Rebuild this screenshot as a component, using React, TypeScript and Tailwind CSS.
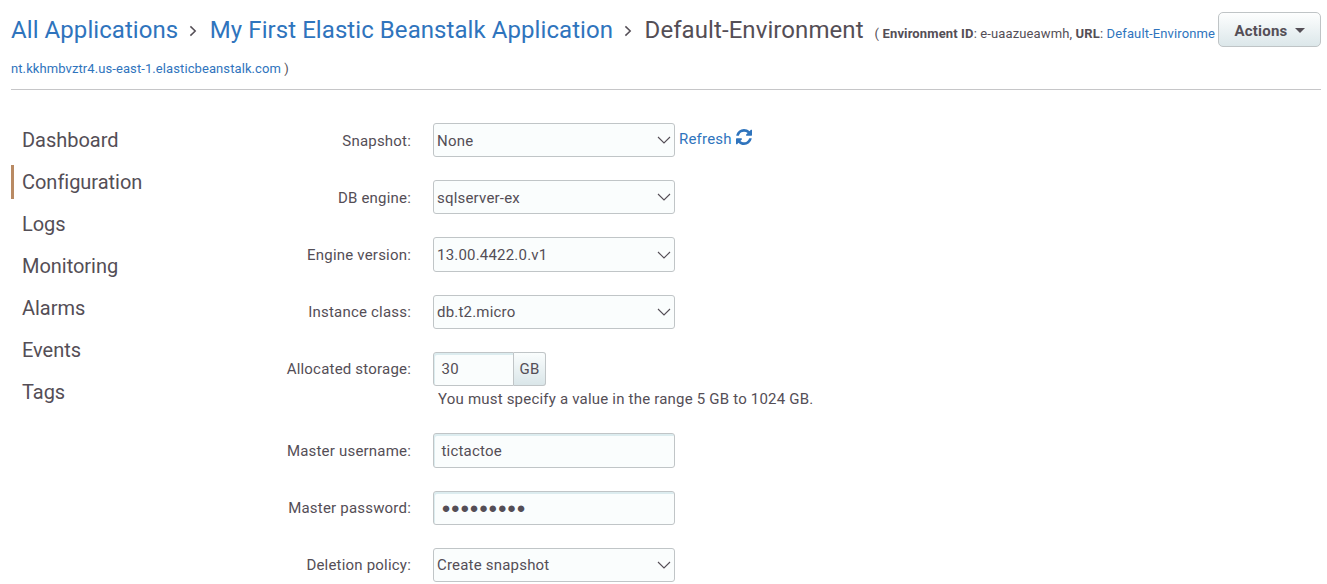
import type { ReactNode } from 'react';

const navItems = ['Dashboard', 'Configuration', 'Logs', 'Monitoring', 'Alarms', 'Events', 'Tags'];

function RefreshIcon() {
  return (
    <svg viewBox="0 0 1536 1536" className="mb-[4px] h-[16px] w-[16px]" fill="currentColor" aria-hidden="true">
      <path d="M1511 928q0 5-1 7-64 268-268 434.5t-478 166.5q-146 0-282.5-55t-243.5-157l-129 129q-19 19-45 19t-45-19-19-45v-448q0-26 19-45t45-19h448q26 0 45 19t19 45-19 45l-137 137q71 66 161 102t187 36q134 0 250-65t186-179q11-17 53-117 8-23 30-23h192q13 0 22.5 9.5t9.5 22.5zm25-800v448q0 26-19 45t-45 19h-448q-26 0-45-19t-19-45 19-45l138-138q-148-137-349-137-134 0-250 65t-186 179q-11 17-53 117-8 23-30 23h-199q-13 0-22.5-9.5t-9.5-22.5v-7q65-268 270-434.5t480-166.5q146 0 284 55.5t245 156.5l130-129q19-19 45-19t45 19 19 45z" />
    </svg>
  );
}

function Separator() {
  return (
    <svg viewBox="0 0 8 12" className="mr-[12.5px] ml-[11px] mt-[2px] h-[12px] w-[8px] shrink-0" fill="none" stroke="#544e56" strokeWidth="1.5">
      <path d="M1.4 1.4 6.2 6 1.4 10.6" />
    </svg>
  );
}

function Row({ label, children, className = 'mb-[22.95px]' }: { label: string; children: ReactNode; className?: string }) {
  return (
    <div className={`flex h-[34.25px] items-center ${className}`}>
      <label className="w-[181px] shrink-0 pt-[1.5px] text-right">{label}</label>
      <div className="ml-[22px] flex h-full">{children}</div>
    </div>
  );
}

function Select({ value }: { value: string }) {
  return (
    <div className="flex h-full w-[242px] items-center justify-between rounded-[3px] border border-[#c0c5c7] bg-[#fafdfd] pr-[3px] pl-[3px]">
      <span className="pt-[1.5px]">{value}</span>
      <svg viewBox="0 0 14 8" className="h-[8px] w-[14px]" fill="none" stroke="#544e56" strokeWidth="1.1">
        <path d="M1 1 7 7 13 1" />
      </svg>
    </div>
  );
}

function TextBox({ children }: { children: ReactNode }) {
  return (
    <div className="flex h-full w-[242px] items-center rounded-[3px] border border-[#c0c5c7] bg-[#fafdfd] pt-[1.5px] pl-[7.5px] shadow-[inset_1px_2px_0_#dcecef]">
      {children}
    </div>
  );
}

export default function App() {
  return (
    <div className="h-[584px] overflow-hidden bg-white pr-[6px] pl-[11px] font-['Roboto',sans-serif] text-[15px] tracking-[0.2px] text-[#544e56]">
      <header className="h-[90px] border-b border-[#c6c6c8]">
        <div className="flex h-[60px] items-center">
          <a className="text-[24px] tracking-[0.07px] whitespace-nowrap text-[#2f74bd]">All Applications</a>
          <Separator />
          <a className="text-[24px] tracking-[0.07px] whitespace-nowrap text-[#2f74bd]">My First Elastic Beanstalk Application</a>
          <Separator />
          <h1 className="text-[24px] tracking-[0.08px] whitespace-nowrap">Default-Environment</h1>
          <p className="mt-[7px] ml-[11px] text-[13px] tracking-[0.13px] whitespace-nowrap">
            ( <b>Environment ID</b>: e-uaazueawmh, <b>URL</b>: <a className="text-[#2f74bd]">Default-Environme</a>
          </p>
          <button className="-mt-px ml-auto flex h-[35px] w-[103px] shrink-0 items-center rounded-[5px] border border-[#bfc4c6] bg-linear-to-b from-[#fdfefe] to-[#dce7ea] pt-[3px] pl-[15.5px] text-[15px] font-bold">
            Actions
            <svg viewBox="0 0 10 5" className="mb-[2px] ml-[8px] h-[5px] w-[10px]" fill="currentColor">
              <path d="M0 0H10L5 5Z" />
            </svg>
          </button>
        </div>
        <p className="text-[13px] leading-[18px] tracking-[0.09px]">
          <a className="text-[#2f74bd]">nt.kkhmbvztr4.us-east-1.elasticbeanstalk.com</a> )
        </p>
      </header>
      <div className="flex">
        <nav className="w-[219px] shrink-0 pt-[33px] text-[20px] tracking-[-0.03px]">
          {navItems.map((item) => (
            <a
              key={item}
              className={`mb-[8px] flex h-[34px] items-center border-l-[3px] pl-[8px] ${item === 'Configuration' ? 'border-[#b98a63]' : 'border-transparent'}`}
            >
              {item}
            </a>
          ))}
        </nav>
        <main className="pt-[33px]">
          <Row label="Snapshot:">
            <Select value="None" />
            <a className="ml-[4px] flex h-[32.5px] items-center gap-[4px] text-[#2f74bd]">
              Refresh <RefreshIcon />
            </a>
          </Row>
          <Row label="DB engine:">
            <Select value="sqlserver-ex" />
          </Row>
          <Row label="Engine version:">
            <Select value="13.00.4422.0.v1" />
          </Row>
          <Row label="Instance class:">
            <Select value="db.t2.micro" />
          </Row>
          <Row label="Allocated storage:" className="">
            <div className="flex h-full w-[81px] items-center rounded-l-[3px] border border-[#c0c5c7] bg-[#fafdfd] pl-[7.5px] shadow-[inset_1px_2px_0_#dcecef]">
              30
            </div>
            <span className="flex w-[32px] items-center justify-center rounded-r-[3px] border border-l-0 border-[#c0c5c7] bg-linear-to-b from-[#fafdfd] to-[#dae6e9]">
              GB
            </span>
          </Row>
          <p className="mb-[22.35px] ml-[208px] h-[25px] pt-[2px] leading-[23px]">You must specify a value in the range 5 GB to 1024 GB.</p>
          <Row label="Master username:">
            <TextBox>tictactoe</TextBox>
          </Row>
          <Row label="Master password:">
            <TextBox>
              <span className="tracking-[0.3px]">●●●●●●●●●</span>
            </TextBox>
          </Row>
          <Row label="Deletion policy:">
            <Select value="Create snapshot" />
          </Row>
        </main>
      </div>
    </div>
  );
}
